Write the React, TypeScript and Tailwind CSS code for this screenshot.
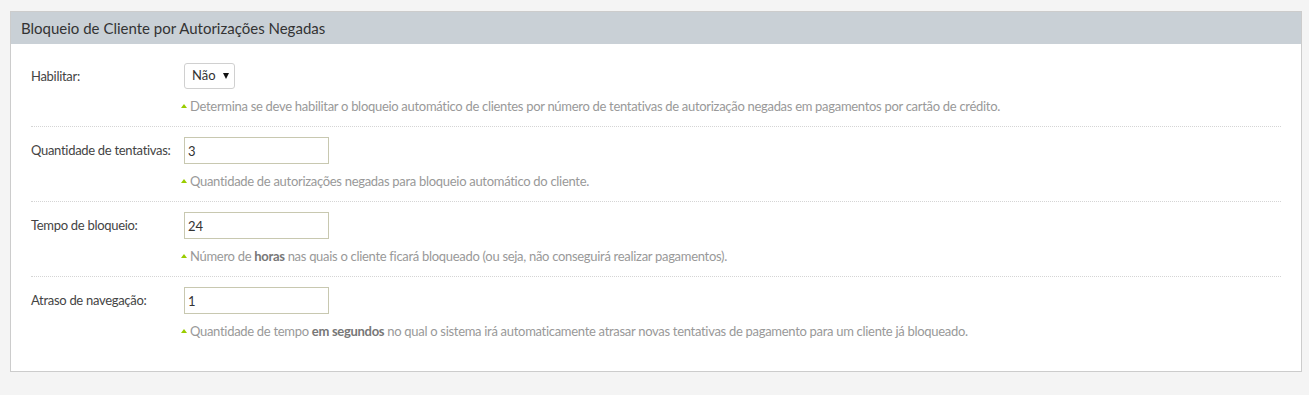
import React from 'react';

const font = { fontFamily: 'Lato, "Open Sans", sans-serif' };

function Help({ children }: { children: React.ReactNode }) {
  return (
    <div className="flex items-center h-[18px] mt-[9px] -ml-[3px] text-[13px] tracking-[-0.3px] text-[#999]">
      <span className="inline-block w-0 h-0 border-l-[3.5px] border-r-[3.5px] border-b-[4px] border-l-transparent border-r-transparent border-b-[#99cc00] mr-[3px] mb-[2px]" />
      <span>{children}</span>
    </div>
  );
}

function Row({ label, children, help, first, last }: { label: string; children: React.ReactNode; help: React.ReactNode; first?: boolean; last?: boolean }) {
  return (
    <div className={`flex ${first ? 'pt-0' : 'pt-[10px]'} ${last ? 'pb-[10px]' : 'pb-[10px] border-b border-dotted border-[#d5d5d5]'}`}>
      <div className="w-[153px] shrink-0 h-[27px] flex items-center text-[13px] tracking-[-0.3px] text-[#444]">{label}</div>
      <div className="flex flex-col">
        {children}
        <Help>{help}</Help>
      </div>
    </div>
  );
}

function TextInput({ value }: { value: string }) {
  return (
    <input
      defaultValue={value}
      className="w-[145px] h-[27px] px-[3px] border border-[#c8c8b0] bg-white text-[13px] text-[#333] outline-none"
      style={font}
    />
  );
}

export default function App() {
  return (
    <div className="min-h-[395px] bg-[#f4f4f4] pt-[11px] pl-[10px] pr-[7px]" style={font}>
      <div className="border border-[#cccccc] bg-white">
        <div className="h-[32px] bg-[#c9d0d6] flex items-center px-[10px] text-[15px] text-[#333]">
          Bloqueio de Cliente por Autorizações Negadas
        </div>
        <div className="px-[20px] pt-[19px] pb-[20px]">
          <Row
            first
            label="Habilitar:"
            help="Determina se deve habilitar o bloqueio automático de clientes por número de tentativas de autorização negadas em pagamentos por cartão de crédito."
          >
            <div className="w-[51px] h-[26px] border border-[#d0d0d0] rounded-[3px] flex items-center pl-[7px] pr-[5px] text-[13px] text-[#333]">
              <span>Não</span>
              <span className="ml-auto inline-block w-0 h-0 border-l-[3.5px] border-r-[3.5px] border-t-[6px] border-l-transparent border-r-transparent border-t-[#111]" />
            </div>
          </Row>
          <Row label="Quantidade de tentativas:" help="Quantidade de autorizações negadas para bloqueio automático do cliente.">
            <TextInput value="3" />
          </Row>
          <Row
            label="Tempo de bloqueio:"
            help={<>Número de <b className="font-bold text-[#777]">horas</b> nas quais o cliente ficará bloqueado (ou seja, não conseguirá realizar pagamentos).</>}
          >
            <TextInput value="24" />
          </Row>
          <Row
            last
            label="Atraso de navegação:"
            help={<>Quantidade de tempo <b className="font-bold text-[#777]">em segundos</b> no qual o sistema irá automaticamente atrasar novas tentativas de pagamento para um cliente já bloqueado.</>}
          >
            <TextInput value="1" />
          </Row>
        </div>
      </div>
    </div>
  );
}
